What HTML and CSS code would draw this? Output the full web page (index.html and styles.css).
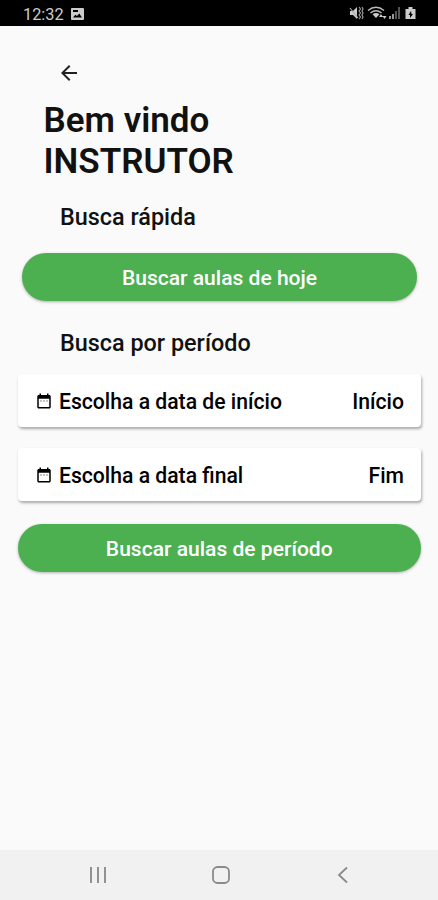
FILE: index.html
```html
<!DOCTYPE html>
<html lang="pt-BR">
<head>
<meta charset="utf-8">
<title>Instrutor</title>
<link rel="stylesheet" href="styles.css">
</head>
<body>
<header class="status">
  <span class="clock">12:32</span>
  <svg class="picture" width="13" height="12" viewBox="0 0 13 12"><path fill="#ccc" fill-rule="evenodd" d="M1 0h11a1 1 0 0 1 1 1v10a1 1 0 0 1-1 1H1a1 1 0 0 1-1-1V1a1 1 0 0 1 1-1zM2 2v2h5V2zM2 9.500h9L8.300 5.500 6 8 4.300 6.700z"/></svg>
  <svg class="signals" width="70" height="16" viewBox="0 0 70 16">
    <g fill="#ccc">
      <path d="M1 6h3l4-4v12l-4-4H1z"/>
      <path d="M1 3l8 10" stroke="#aaa" stroke-width="1.200"/>
      <path d="M10 2l1.500 2L10 6l1.500 2L10 10l1.500 2L10 14M13 2l1 2-1 2 1 2-1 2 1 2-1 2" fill="none" stroke="#999" stroke-width="1.200"/>
      <path d="M19 5.500q8-6.500 16 0M21.500 8q5.500-4.500 11 0" fill="none" stroke="#bbb" stroke-width="1.500"/>
      <path d="M23.500 9.300q3.500-2.600 7 0L27 13zM32 9l2 3h-4zM33.500 11h4l-2 3z"/>
      <path fill="#999" d="M40 11h2v3h-2zM43 9h2v5h-2z"/>
      <path fill="#555" d="M46 6h2v8h-2zM49 2h2v12h-2z"/>
      <path fill-rule="evenodd" d="M59.500 2h4v2h3v10h-10V4h3zM62 6l-2.500 4H61v3l3-4h-1.500z"/>
    </g>
  </svg>
</header>
<main class="screen">
  <svg class="back" width="24" height="24" viewBox="0 0 24 24"><path fill="#222" d="M20 11H7.830l5.590-5.590L12 4l-8 8 8 8 1.410-1.410L7.830 13H20z"/></svg>
  <h1 class="title">Bem vindo<br>INSTRUTOR</h1>
  <h2 class="heading quick">Busca rápida</h2>
  <button class="button today">Buscar aulas de hoje</button>
  <h2 class="heading period">Busca por período</h2>
  <div class="field">
    <svg class="calendar" width="18" height="18" viewBox="0 0 24 24"><path d="M19 4h-1V2h-2v2H8V2H6v2H5c-1.100 0-2 .9-2 2v14c0 1.100.9 2 2 2h14c1.100 0 2-.9 2-2V6c0-1.100-.9-2-2-2zm0 16H5V9h14z"/><path fill="#999" d="M7 11h2v2H7zm4 0h2v2h-2zm4 0h2v2h-2z"/></svg>
    <span class="name">Escolha a data de início</span>
    <span class="value">Início</span>
  </div>
  <div class="field">
    <svg class="calendar" width="18" height="18" viewBox="0 0 24 24"><path d="M19 4h-1V2h-2v2H8V2H6v2H5c-1.100 0-2 .9-2 2v14c0 1.100.9 2 2 2h14c1.100 0 2-.9 2-2V6c0-1.100-.9-2-2-2zm0 16H5V9h14z"/><path fill="#999" d="M7 11h2v2H7zm4 0h2v2h-2zm4 0h2v2h-2z"/></svg>
    <span class="name">Escolha a data final</span>
    <span class="value">Fim</span>
  </div>
  <button class="button range">Buscar aulas de período</button>
</main>
<nav class="nav">
  <svg width="18" height="18" viewBox="0 0 18 18"><path d="M2 1v16M9 1v16M16 1v16" stroke="#929292" stroke-width="2"/></svg>
  <svg width="18" height="18" viewBox="0 0 18 18"><rect x="1" y="1" width="16" height="16" rx="4.500" fill="none" stroke="#8a8a8a" stroke-width="1.800"/></svg>
  <svg width="18" height="18" viewBox="0 0 18 18"><path d="M13 1.500L5 9l8 7.500" fill="none" stroke="#8a8a8a" stroke-width="1.800"/></svg>
</nav>
</body>
</html>
```
FILE: styles.css
```css
* { box-sizing: border-box; }
body {
  margin: 0;
  height: 900px;
  display: flex;
  flex-direction: column;
  overflow: hidden;
  background: #fafafa;
  color: #111;
  font-family: Roboto, "Liberation Sans", sans-serif;
}
.status {
  height: 26px;
  padding: 0 19px 0 23px;
  display: flex;
  align-items: center;
  background: #000;
  color: #ccc;
}
.clock { font-size: 16.300px; line-height: 26px; padding-top: 3px; }
.picture { margin-left: 7px; margin-top: 2px; }
.signals { margin-left: auto; }
.screen {
  flex: 1;
  display: flex;
  flex-direction: column;
  padding: 35px 17px 0;
}
.back { margin-left: 40px; }
.title {
  margin: 15px 0 0 26.500px;
  font-size: 35px;
  line-height: 41px;
  font-weight: 600;
}
.heading {
  margin: 0 0 0 43px;
  font-size: 23.400px;
  line-height: 28px;
  font-weight: 500;
}
.quick { margin-top: 21px; }
.period { margin-top: 28px; }
.button {
  height: 48px;
  padding: 2px 0 0;
  border: 0;
  border-radius: 24px;
  background: #4caf50;
  color: #fff;
  font: 500 21.050px/46px Roboto, "Liberation Sans", sans-serif;
  box-shadow: 0 1px 3px rgba(0, 0, 0, .3);
}
.today { margin: 22px 4px 0 5px; }
.range { margin: 23px 0 0 .5px; }
.field {
  height: 53px;
  margin: 17px 0 0 1px;
  padding: 1px 17px 0;
  display: flex;
  align-items: center;
  background: #fff;
  border-radius: 4px;
  color: #000;
  font-size: 21.150px;
  font-weight: 500;
  box-shadow: 1px 2px 3px rgba(0, 0, 0, .33);
}
.field + .field { margin-top: 21px; }
.name { margin-left: 6px; }
.value { margin-left: auto; }
.nav {
  height: 50px;
  padding: 0 86px 0 89px;
  display: flex;
  justify-content: space-between;
  align-items: center;
  background: #f1f1f1;
}
```
